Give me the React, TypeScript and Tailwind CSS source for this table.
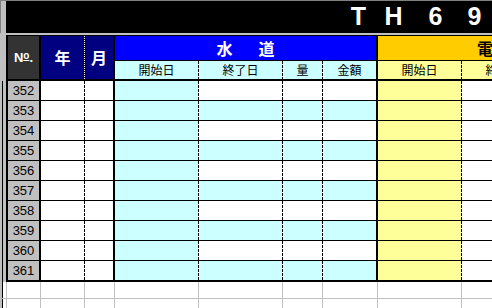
import React from "react";

const JP = "font-['Noto_Sans_CJK_JP','Liberation_Sans',sans-serif]";

function DashV({ white = false }: { white?: boolean }) {
  return white ? (
    <div className="w-px shrink-0 bg-[repeating-linear-gradient(to_bottom,#ffffff_0px,#ffffff_1px,#000000_1px,#000000_2px)]" />
  ) : (
    <div className="w-px shrink-0 bg-[repeating-linear-gradient(to_bottom,#000000_0px,#000000_3px,transparent_3px,transparent_4px)]" />
  );
}

function BlackV() {
  return <div className="w-[2px] shrink-0 bg-black" />;
}

function DataRow({ n, alt, last }: { n: number; alt: boolean; last: boolean }) {
  const mid = alt ? "bg-[#ccffff]" : "bg-white";
  return (
    <>
      <div className="flex h-[19px] bg-white">
        <BlackV />
        <div className="w-[31px] shrink-0 bg-[#c0c0c0] flex items-center justify-center text-[13px] leading-none text-black font-['Liberation_Sans',sans-serif]">
          {n}
        </div>
        <BlackV />
        <div className="w-[43px] shrink-0 bg-white" />
        <DashV />
        <div className="w-[28px] shrink-0 bg-white" />
        <BlackV />
        <div className="w-[83px] shrink-0 bg-[#ccffff]" />
        <DashV />
        <div className={`w-[83px] shrink-0 ${mid}`} />
        <DashV />
        <div className={`w-[39px] shrink-0 ${mid}`} />
        <DashV />
        <div className={`w-[53px] shrink-0 ${mid}`} />
        <BlackV />
        <div className="w-[83px] shrink-0 bg-[#ffff99]" />
        <DashV />
        <div className="flex-1 bg-white" />
      </div>
      <div className={last ? "h-[2px] bg-black" : "h-px bg-black"} />
    </>
  );
}

function GridRow({ h }: { h: string }) {
  const cell = "shrink-0 border-r border-[#c0c0c0]";
  return (
    <div className={`flex ${h}`}>
      <div className="w-[2px] shrink-0 bg-[#c0c0c0]" />
      <div className="w-px shrink-0 bg-black" />
      <div className="w-[4px] shrink-0 border-r border-[#c0c0c0] bg-white" />
      <div className={`w-[34px] ${cell}`} />
      <div className={`w-[44px] ${cell}`} />
      <div className={`w-[30px] ${cell}`} />
      <div className={`w-[84px] ${cell}`} />
      <div className={`w-[84px] ${cell}`} />
      <div className={`w-[40px] ${cell}`} />
      <div className={`w-[55px] ${cell}`} />
      <div className={`w-[84px] ${cell}`} />
      <div className="flex-1" />
    </div>
  );
}

export default function App() {
  const rows = [352, 353, 354, 355, 356, 357, 358, 359, 360, 361];
  return (
    <div className="w-[492px] h-[308px] overflow-hidden bg-white flex flex-col">
      {/* top gray line */}
      <div className="h-px bg-[#808080]" />
      {/* title band */}
      <div className="flex h-[35px]">
        <div className="w-[6px] shrink-0 border-l border-[#808080] bg-[#c0c0c0]" />
        <div className="flex-1 bg-black flex items-center pl-[335px] overflow-hidden text-white font-bold text-[25px] leading-none font-['Liberation_Sans',sans-serif]">
          <span className="w-[35px] shrink-0 text-center">T</span>
          <span className="w-[35px] shrink-0 text-center">H</span>
          <span className="w-[49px] shrink-0 text-center">6</span>
          <span className="w-[29px] shrink-0 text-center">9</span>
        </div>
      </div>
      {/* gray band */}
      <div className="h-[2px] bg-[#c0c0c0]" />
      {/* header block */}
      <div className="flex">
        <div className="w-[6px] shrink-0 bg-[#c0c0c0]" />
        <div className="flex-1 flex flex-col">
          <div className="h-px bg-black" />
          <div className="flex h-[43px]">
            <BlackV />
            <div className="w-[31px] shrink-0 bg-[#333333] flex items-center justify-center text-white font-bold text-[13px] leading-none font-['Liberation_Sans',sans-serif]">
              <span className="underline-offset-1">N<span className="underline text-[10px] align-top">o</span>.</span>
            </div>
            <BlackV />
            <div className={`w-[43px] shrink-0 bg-[#000080] flex items-center justify-center text-white font-bold text-[16px] leading-none ${JP}`}>
              年
            </div>
            <DashV white />
            <div className={`w-[28px] shrink-0 bg-[#000080] flex items-center justify-center text-white font-bold text-[16px] leading-none ${JP}`}>
              月
            </div>
            <BlackV />
            <div className="w-[261px] shrink-0 flex flex-col">
              <div className={`h-[24px] bg-[#0000ff] flex items-center justify-center gap-[26px] text-white font-bold text-[16px] leading-none ${JP}`}>
                <span>水</span>
                <span>道</span>
              </div>
              <div className="h-px bg-black" />
              <div className={`h-[18px] flex bg-[#ccffff] text-[12px] leading-none text-black ${JP}`}>
                <div className="w-[83px] shrink-0 flex items-center justify-center">開始日</div>
                <DashV />
                <div className="w-[83px] shrink-0 flex items-center justify-center">終了日</div>
                <DashV />
                <div className="w-[39px] shrink-0 flex items-center justify-center">量</div>
                <DashV />
                <div className="w-[53px] shrink-0 flex items-center justify-center">金額</div>
              </div>
            </div>
            <BlackV />
            <div className="flex-1 flex flex-col">
              <div className={`h-[24px] bg-[#ffcc00] flex items-center pl-[99px] text-black font-bold text-[16px] leading-none ${JP}`}>
                <span>電</span>
              </div>
              <div className="h-px bg-black" />
              <div className={`h-[18px] flex bg-[#ffff99] text-[12px] leading-none text-black ${JP}`}>
                <div className="w-[83px] shrink-0 flex items-center justify-center">開始日</div>
                <DashV />
                <div className="w-[83px] shrink-0 flex items-center justify-center">終了日</div>
              </div>
            </div>
          </div>
          <div className="h-[2px] bg-black" />
        </div>
      </div>
      {/* data block */}
      <div className="flex">
        <div className="w-[6px] shrink-0 flex">
          <div className="w-[2px] bg-[#c0c0c0]" />
          <div className="w-px bg-black" />
          <div className="w-[3px] bg-[#c0c0c0]" />
        </div>
        <div className="flex-1 flex flex-col">
          {rows.map((n, i) => (
            <DataRow key={n} n={n} alt={i % 2 === 1} last={i === rows.length - 1} />
          ))}
        </div>
      </div>
      {/* empty grid below */}
      <div className="border-b border-[#c0c0c0]">
        <GridRow h="h-[16px]" />
      </div>
      <GridRow h="h-[10px]" />
    </div>
  );
}
